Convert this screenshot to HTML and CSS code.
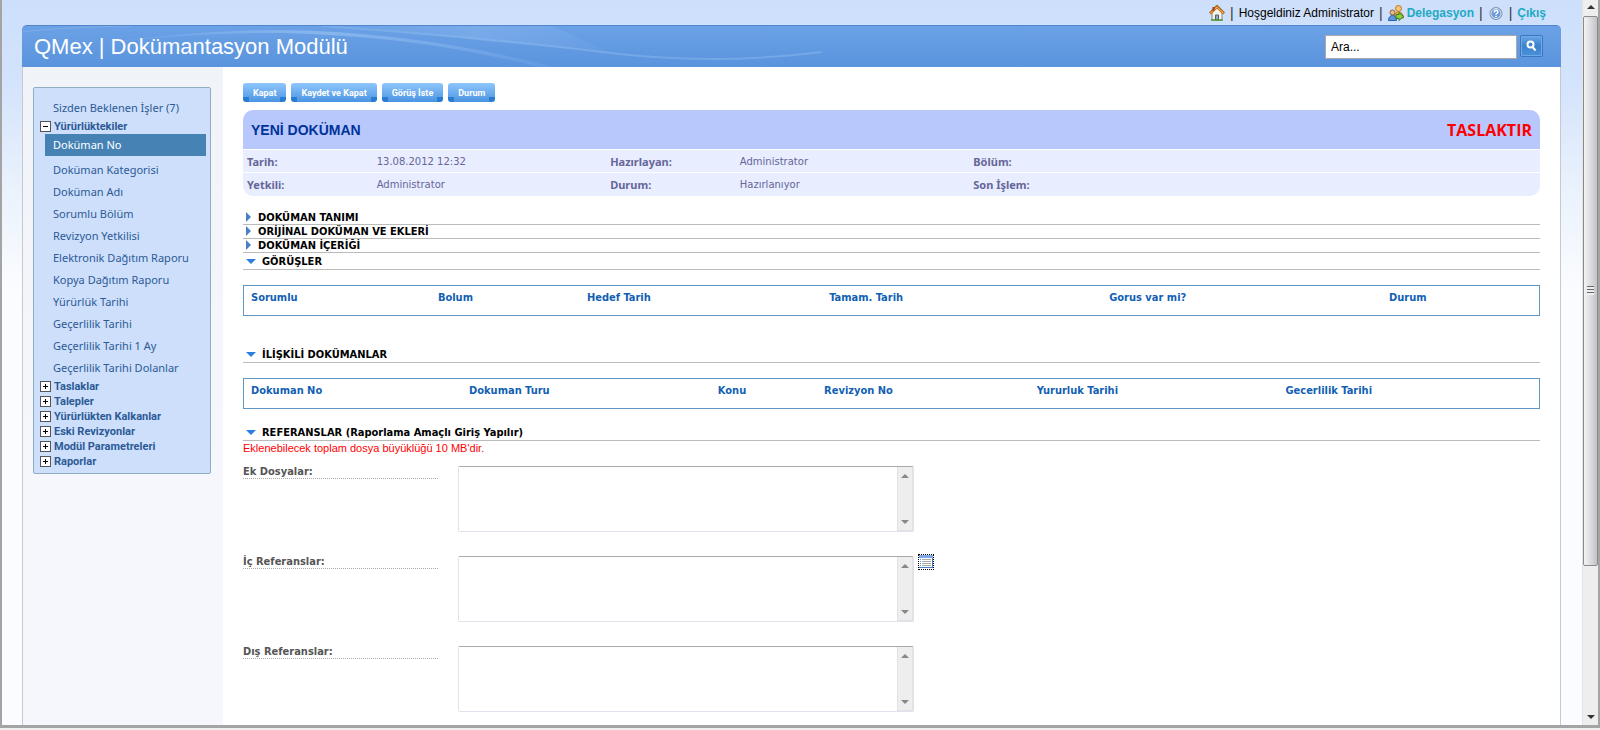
FILE: index.html
```html
<!DOCTYPE html>
<html lang="tr">
<head>
<meta charset="utf-8">
<title>QMex | Dokümantasyon Modülü</title>
<link rel="stylesheet" href="styles.css">
</head>
<body>
<div class="window">
  <div class="page">
    <nav class="topbar">
      <a href="#" aria-label="Ana sayfa"><svg class="icon" viewBox="0 0 16 16"><path d="M3 8v7h10V8L8 3z" fill="#f4f1e6" stroke="#8a8a80"/><path d="M1 8.500 8 1.500l7 7" fill="none" stroke="#a8641c" stroke-width="3"/><path d="M1.500 8.300 8 2l6.500 6.300" fill="none" stroke="#f0a850" stroke-width="1.200"/><path d="M3.500 2h2v3l-2 1.500z" fill="#a03c20"/><path d="M6.500 15v-5h3v5z" fill="#8fa8c4" stroke="#56606e"/><path d="M2 15h12" stroke="#4f9a38" stroke-width="1.500"/></svg></a>
      <span class="bar">|</span>
      <span>Hoşgeldiniz Administrator</span>
      <span class="bar">|</span>
      <a href="#" class="strong"><svg class="icon" viewBox="0 0 16 16"><circle cx="10.500" cy="3.500" r="3" fill="#f6c27c" stroke="#c07818"/><path d="M6 13c0-4 2-6 4.500-6S15.500 9 15.500 13z" fill="#f2b032" stroke="#b67a14"/><circle cx="4.500" cy="7.500" r="2.500" fill="#e9b98c" stroke="#94603a"/><path d="M.500 15.500c0-3 1.500-5 4-5s4 2 4 5z" fill="#5b97df" stroke="#2d5fa8"/><path d="M8 9.500h3V7.500l4.500 4-4.500 4v-2H8z" fill="#8ad04c" stroke="#367a1c"/></svg>Delegasyon</a>
      <span class="bar">|</span>
      <a href="#" aria-label="Yardım"><svg class="icon" viewBox="0 0 16 16"><circle cx="8" cy="8.500" r="6" fill="#6d9bd6" stroke="#8794ac"/><circle cx="8" cy="8.500" r="5" fill="none" stroke="#dce8f8"/><path d="M6.300 7.500c0-3 3.500-2.600 3.500-.300 0 1.300-1.800 1.300-1.800 2.500M8 10.800v1.300" fill="none" stroke="#fff" stroke-width="1.500"/></svg></a>
      <span class="bar">|</span>
      <a href="#" class="strong">Çıkış</a>
    </nav>
    <div class="shell">
      <header class="header">
        <svg class="swoosh" viewBox="0 0 900 42" preserveAspectRatio="none">
          <defs><linearGradient id="fade"><stop offset="0" stop-color="#9cc4f4" stop-opacity="0"/><stop offset=".5" stop-color="#9cc4f4" stop-opacity=".6"/><stop offset="1" stop-color="#9cc4f4" stop-opacity=".1"/></linearGradient></defs>
          <path d="M320 0Q470 16 590 27L530 0z" fill="url(#fade)" opacity=".5"/>
          <path d="M0 6Q40 1 110 0" fill="none" stroke="#94bdf0" opacity=".5"/>
          <path d="M60 20Q170 4 260 4 400 6 536 42H520Q400 10 260 7 170 6 60 20z" fill="url(#fade)"/>
          <path d="M300 0Q470 12 580 26T800 26" fill="none" stroke="#8ab8ee" stroke-width="2" opacity=".5"/>
        </svg>
        <h1>QMex | Dokümantasyon Modülü</h1>
        <form class="search">
          <input type="text" value="Ara..." aria-label="Ara">
          <button type="button" aria-label="Ara"><svg viewBox="0 0 12 12"><circle cx="5" cy="4.500" r="3" fill="none" stroke="#fff" stroke-width="2"/><path d="m7 7 3 3.500" stroke="#fff" stroke-width="2"/></svg></button>
        </form>
      </header>
      <div class="columns">
        <aside class="sidebar">
          <div class="tree">
            <a class="leaf first" href="#">Sizden Beklenen İşler (7)</a>
            <a class="branch open" href="#">Yürürlüktekiler</a>
            <a class="leaf selected" href="#">Doküman No</a>
            <a class="leaf" href="#">Doküman Kategorisi</a>
            <a class="leaf" href="#">Doküman Adı</a>
            <a class="leaf" href="#">Sorumlu Bölüm</a>
            <a class="leaf" href="#">Revizyon Yetkilisi</a>
            <a class="leaf" href="#">Elektronik Dağıtım Raporu</a>
            <a class="leaf" href="#">Kopya Dağıtım Raporu</a>
            <a class="leaf" href="#">Yürürlük Tarihi</a>
            <a class="leaf" href="#">Geçerlilik Tarihi</a>
            <a class="leaf" href="#">Geçerlilik Tarihi 1 Ay</a>
            <a class="leaf" href="#">Geçerlilik Tarihi Dolanlar</a>
            <a class="branch" href="#">Taslaklar</a>
            <a class="branch" href="#">Talepler</a>
            <a class="branch" href="#">Yürürlükten Kalkanlar</a>
            <a class="branch" href="#">Eski Revizyonlar</a>
            <a class="branch" href="#">Modül Parametreleri</a>
            <a class="branch" href="#">Raporlar</a>
          </div>
        </aside>
        <main class="main">
          <div class="actions">
            <button type="button">Kapat</button>
            <button type="button">Kaydet ve Kapat</button>
            <button type="button">Görüş İste</button>
            <button type="button">Durum</button>
          </div>
          <section class="card">
            <div class="banner"><h2>YENİ DOKÜMAN</h2><strong>TASLAKTIR</strong></div>
            <table class="info">
              <tr><th>Tarih:</th><td>13.08.2012 12:32</td><th>Hazırlayan:</th><td>Administrator</td><th>Bölüm:</th><td></td></tr>
              <tr><th>Yetkili:</th><td>Administrator</td><th>Durum:</th><td>Hazırlanıyor</td><th>Son İşlem:</th><td></td></tr>
            </table>
          </section>
          <h3 class="section closed">DOKÜMAN TANIMI</h3>
          <h3 class="section closed">ORİJİNAL DOKÜMAN VE EKLERİ</h3>
          <h3 class="section closed">DOKÜMAN İÇERİĞİ</h3>
          <h3 class="section">GÖRÜŞLER</h3>
          <table class="grid opinions">
            <tr><th>Sorumlu</th><th>Bolum</th><th>Hedef Tarih</th><th>Tamam. Tarih</th><th>Gorus var mi?</th><th>Durum</th></tr>
          </table>
          <h3 class="section spaced">İLİŞKİLİ DOKÜMANLAR</h3>
          <table class="grid related">
            <tr><th>Dokuman No</th><th>Dokuman Turu</th><th>Konu</th><th>Revizyon No</th><th>Yururluk Tarihi</th><th>Gecerlilik Tarihi</th></tr>
          </table>
          <h3 class="section refs">REFERANSLAR (Raporlama Amaçlı Giriş Yapılır)</h3>
          <p class="note">Eklenebilecek toplam dosya büyüklüğü 10 MB'dir.</p>
          <div class="field">
            <label for="files">Ek Dosyalar:</label>
            <div class="box"><textarea id="files"></textarea><div class="strip"><i class="up"></i><i class="down"></i></div></div>
          </div>
          <div class="field">
            <label for="inner">İç Referanslar:</label>
            <div class="box"><textarea id="inner"></textarea><div class="strip"><i class="up"></i><i class="down"></i></div></div>
            <button class="pick" type="button" aria-label="Seç"><svg viewBox="0 0 14 14" shape-rendering="crispEdges"><path d="M0 0h14v13H0z" fill="#4a7ccc"/><path d="M0 0h14v3H0z" fill="#7fa8e6"/><path d="M0 3h13v9H0z" fill="#fff"/><path d="M3 4.500h9M3 6.500h9M3 8.500h9M3 10.500h9" stroke="#aaa"/><path d="M1 4.500h1M1 6.500h1M1 8.500h1M1 10.500h1" stroke="#39a0f4"/></svg></button>
          </div>
          <div class="field">
            <label for="outer">Dış Referanslar:</label>
            <div class="box"><textarea id="outer"></textarea><div class="strip"><i class="up"></i><i class="down"></i></div></div>
          </div>
        </main>
      </div>
    </div>
  </div>
  <div class="scrollbar"><i class="up"></i><div class="thumb"><span class="grip"></span></div><i class="down"></i></div>
</div>
</body>
</html>
```
FILE: styles.css
```css
* { box-sizing: border-box; }
body { margin: 0; background: #efefef; font-family: "Liberation Sans", Arial, sans-serif; font-size: 12px; color: #000; }
a { color: inherit; text-decoration: none; }
h1, h2, h3, p { margin: 0; }
button { cursor: pointer; }
table { border-collapse: collapse; width: 100%; table-layout: fixed; }
th { text-align: left; }

.window { display: flex; height: calc(100vh - 2px); overflow: hidden; border: solid #a4a4a4; border-width: 0 2px 3px; }
.page { flex: 1; min-width: 0; padding: 0 21px 0 20px; overflow: hidden; display: flex; flex-direction: column; background: linear-gradient(#cddffb, #d3e3fc 80px, #eaf2fc 190px, #fbfcff 290px, #fbfcff); }

.topbar { display: flex; flex: none; justify-content: flex-end; align-items: center; gap: 5px; height: 25px; padding-right: 15px; }
.topbar a { display: flex; align-items: center; gap: 3px; }
.topbar .strong { color: #22aac4; font-weight: bold; }
.topbar .bar { font-size: 14px; color: #333; }
.icon { width: 16px; height: 16px; display: block; }

.shell { flex: 1; display: flex; flex-direction: column; }
.header { position: relative; display: flex; align-items: center; justify-content: space-between; flex: none; height: 42px; padding: 0 18px 0 12px; border-top: 1px solid #5288cb; border-radius: 5px 5px 0 0; background: linear-gradient(#6ba1e6, #5a94dd); overflow: hidden; }
.header h1 { position: relative; font-size: 22px; font-weight: normal; color: #fff; }
.swoosh { position: absolute; left: 0; top: 0; width: 900px; height: 42px; }
.search { display: flex; gap: 3px; }
.search input { width: 192px; height: 24px; padding: 0 5px; border: 1px solid #aaa; background: #fff; font: 12px "Liberation Sans", Arial, sans-serif; }
.search button { width: 23px; height: 22px; padding: 4px; border: 1px solid #3a78c0; border-radius: 2px; background: linear-gradient(#6ba6e6, #3c82cc 50%, #4a90da); box-shadow: inset 0 0 0 1px #6ea8e6; }
.search svg { display: block; width: 13px; height: 12px; }

.columns { flex: 1; display: flex; border: solid #c6c9cf; border-width: 0 1px; background: #fff; }
.sidebar { flex: none; width: 200px; padding: 20px 12px 0 10px; background: linear-gradient(#f0f3f8, #f6f7fc 400px); }
.tree { display: flex; flex-direction: column; padding: 9px 4px 4px 6px; border: 1px solid #90adc4; border-radius: 2px; background: #cedffb; color: #2c5a96; font-family: "Noto Sans", sans-serif; font-size: 11px; white-space: nowrap; }
.leaf { height: 22px; line-height: 22px; padding-left: 13px; }
.selected { margin: 0 0 3px 5px; padding-left: 8px; color: #fff; background: #4682b4; }
.branch { display: flex; align-items: center; gap: 3px; height: 15px; line-height: 15px; font-family: Roboto, sans-serif; font-size: 11px; font-weight: bold; }
.branch::before { content: ""; width: 9px; height: 9px; border: 1px solid #555; background: linear-gradient(#000, #000) center / 5px 1px no-repeat, linear-gradient(#000, #000) center / 1px 5px no-repeat, #fff; }
.open::before { background: linear-gradient(#000, #000) center / 5px 1px no-repeat, #fff; }

.main { flex: 1; min-width: 0; padding: 16px 20px 0; font-family: "DejaVu Sans Condensed", Tahoma, sans-serif; }
.actions { display: flex; gap: 5px; margin-bottom: 8px; }
.actions button { height: 19px; padding: 0 10px; border: 0; border-radius: 3px; color: #fff; font: bold 9px Roboto, sans-serif; background: linear-gradient(#2a7cd0, #2a7cd0) left bottom / 6px 5px no-repeat, linear-gradient(#2a7cd0, #2a7cd0) right bottom / 6px 5px no-repeat, linear-gradient(#8fc6fc, #4a94e2); }

.card { border-radius: 10px; overflow: hidden; margin-bottom: 15px; }
.banner { display: flex; align-items: center; justify-content: space-between; height: 39px; padding: 0 8px; background: #b8c8fd; }
.banner h2 { font: bold 14px "Liberation Sans", Arial, sans-serif; color: #039; }
.banner strong { font: bold 16px "Open Sans", sans-serif; color: #f00; }
.info td, .info th { height: 23px; padding: 0 4px; border-top: 1px solid #fff; background: #e8edff; color: #669; font-size: 10px; }
.info th { width: 10%; font: bold 11px "Noto Sans", sans-serif; }
.info td { width: 18%; font-family: "DejaVu Sans", Verdana, sans-serif; }
.info td:last-child { width: auto; }

.section { display: flex; align-items: flex-end; gap: 6px; height: 17px; border-bottom: 1px solid #bbb; font-size: 11px; line-height: 14px; font-weight: bold; padding-left: 3px; }
.section::before { content: ""; border: 4px solid transparent; border-width: 5px 5px 0; border-top-color: #2a7de1; margin-bottom: 5px; }
.closed { height: 14px; gap: 7px; line-height: 13px; }
.closed::before { border-width: 5px 0 5px 5px; border-color: transparent transparent transparent #4a7fc6; margin-bottom: 2px; }
.spaced { margin-top: 30px; }
.refs { margin-top: 15px; }

.grid { margin-top: 15px; border: 1px solid #6096c4; }
.grid th { height: 30px; padding: 0 0 5px; font-size: 11px; color: #125fb4; }
.grid th:first-child { padding-left: 7px; }
.opinions th:nth-child(1) { width: 15%; }
.opinions th:nth-child(2) { width: 11.5%; }
.opinions th:nth-child(3) { width: 18.7%; }
.opinions th:nth-child(4), .opinions th:nth-child(5) { width: 21.6%; }
.related th:nth-child(1) { width: 17.4%; }
.related th:nth-child(2), .related th:nth-child(5) { width: 19.2%; }
.related th:nth-child(3) { width: 8.2%; }
.related th:nth-child(4) { width: 16.4%; }

.note { font: 11px/15px "Liberation Sans", Arial, sans-serif; color: #f00; margin-bottom: 10px; }
.field { display: flex; align-items: flex-start; margin-bottom: 24px; }
.field label { width: 195px; margin-right: 20px; height: 13px; line-height: 12px; border-bottom: 1px dotted #aaa; font-size: 11px; font-weight: bold; color: #555; }
.box { display: flex; width: 456px; height: 66px; border: 1px solid #e0e2ec; border-top-color: #aaa; border-radius: 2px; }
.box textarea { flex: 1; border: 0; padding: 2px; resize: none; outline: 0; background: #fff; overflow: hidden; }
.strip { display: flex; flex-direction: column; justify-content: space-between; align-items: center; width: 16px; padding: 7px 0 6px; background: #eee; border: 1px solid #e2e2e2; border-top: 0; }
.up, .down { border: solid transparent; border-width: 0 4px 4px; border-bottom-color: #888; }
.down { border-width: 4px 4px 0; border-top-color: #888; }
.pick { width: 16px; height: 16px; margin: -2px 0 0 4px; padding: 0; border: 1px dotted #000; background: none; }
.pick svg { display: block; width: 14px; height: 14px; }

.scrollbar { display: flex; flex-direction: column; align-items: center; width: 16px; flex: none; padding: 5px 0 6px; background: #eee; border-left: 1px solid #e4e4e4; }
.scrollbar .up { border-bottom-color: #333; margin-bottom: 7px; }
.scrollbar .down { border-top-color: #333; margin-top: auto; }
.thumb { display: flex; align-items: center; justify-content: center; width: 15px; height: 77%; border: 1px solid #8a8a8a; border-radius: 2px; background: linear-gradient(to right, #f4f4f4, #dcdce0 50%, #c2c2c8); }
.grip { width: 7px; height: 9px; background: repeating-linear-gradient(#666 0 1px, #eee 1px 3px); }
```
